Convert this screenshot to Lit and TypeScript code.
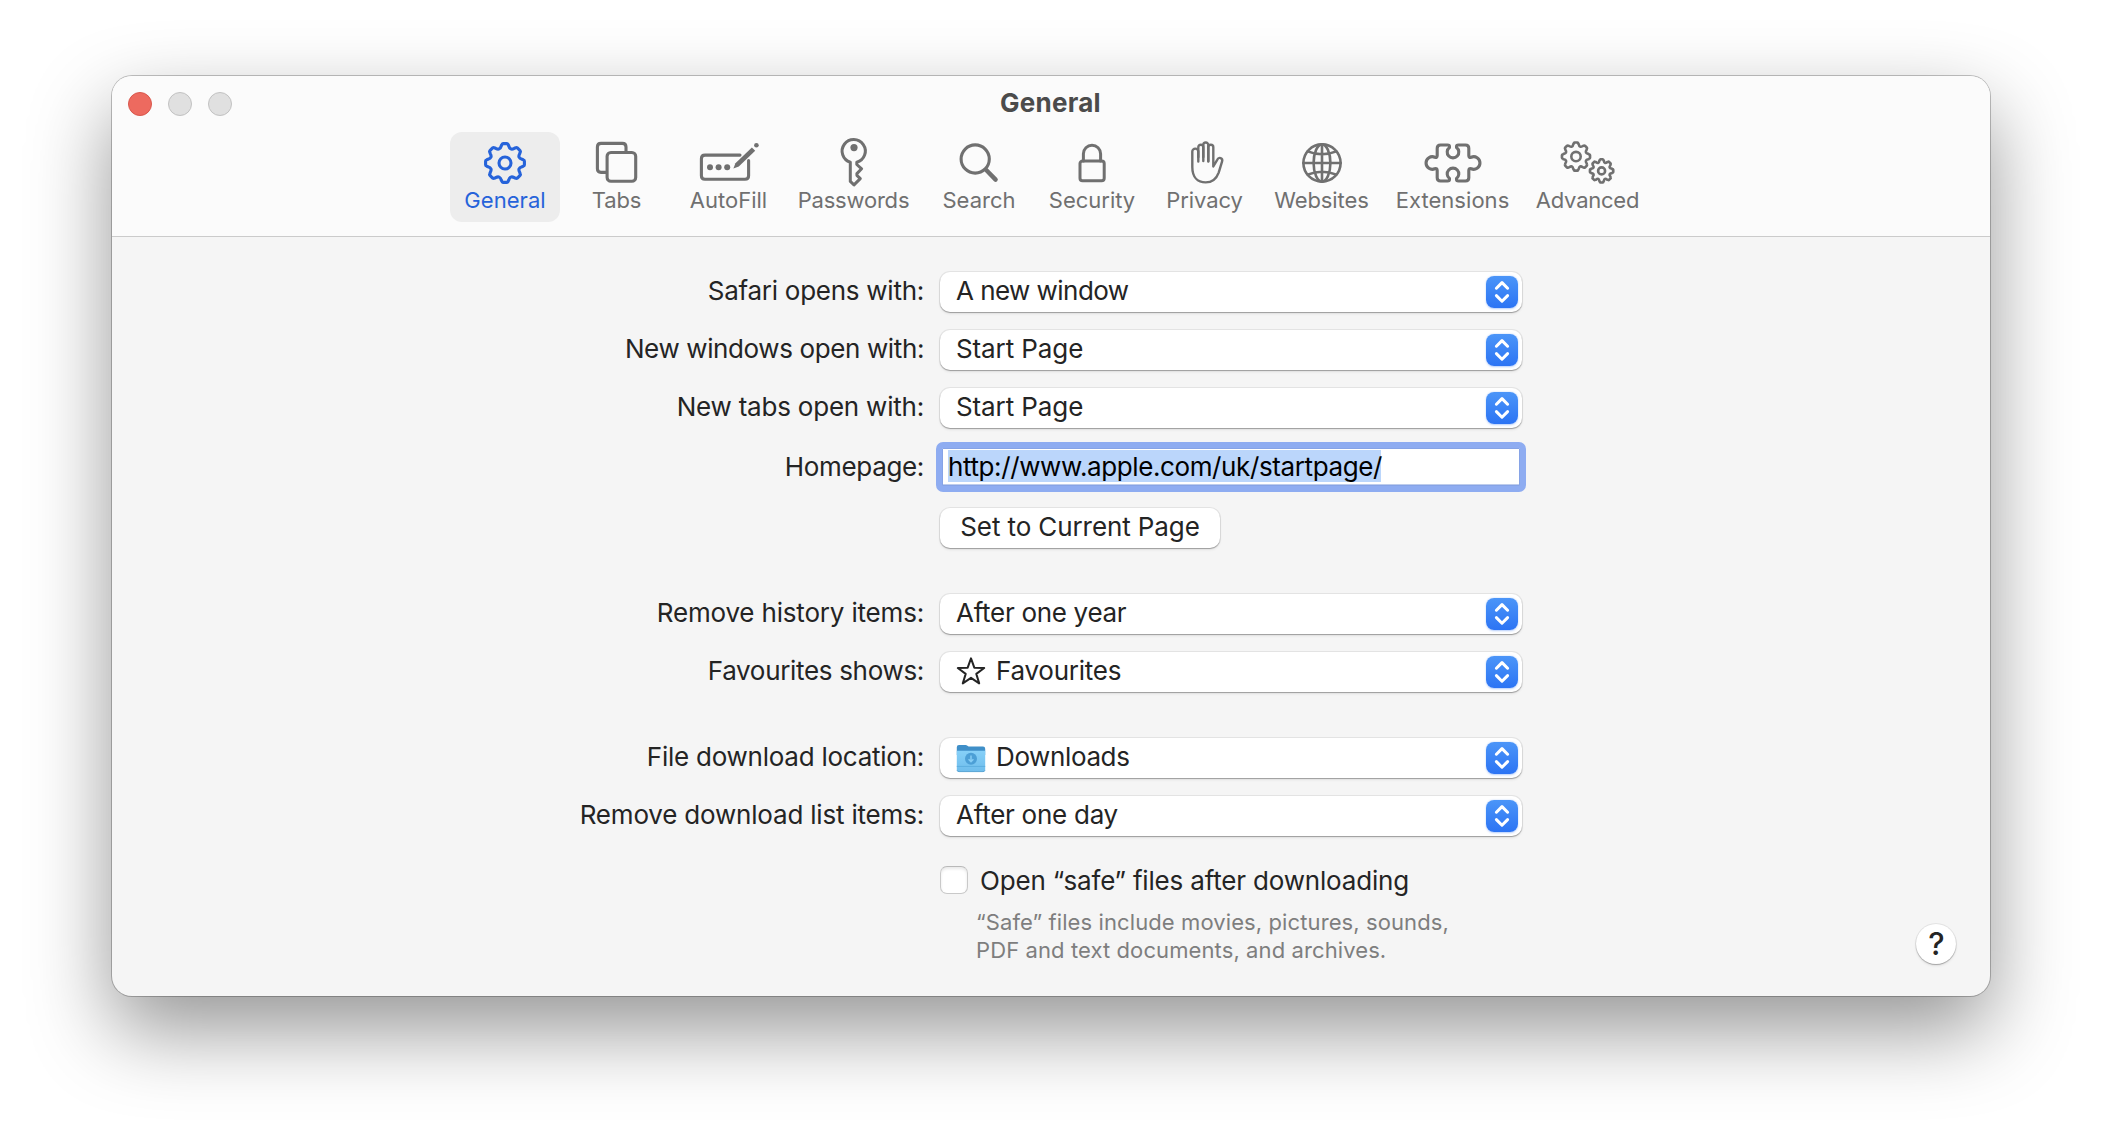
import { LitElement, html, css, svg, nothing } from "lit";
import type { SVGTemplateResult, TemplateResult } from "lit";
import { customElement, property } from "lit/decorators.js";

/** Outline of an eight-toothed cog centred on (cx, cy). */
function cog(cx: number, cy: number, tip: number, root: number): string {
  const at = (deg: number, r: number) => {
    const a = (deg * Math.PI) / 180;
    return `${(cx + r * Math.sin(a)).toFixed(2)} ${(cy - r * Math.cos(a)).toFixed(2)}`;
  };
  let d = "";
  for (let i = 0; i < 8; i++) {
    const t = i * 45;
    const mid = (tip + root) / 2;
    d += `${i ? "L" : "M"}${at(t - 9.5, tip - 0.8)}`;
    d += `Q${at(t - 8.5, tip)} ${at(t - 5.5, tip)}`;
    d += `L${at(t + 5.5, tip)}Q${at(t + 8.5, tip)} ${at(t + 9.5, tip - 0.8)}`;
    d += `L${at(t + 12.5, mid)}`;
    d += `Q${at(t + 22.5, root - 2)} ${at(t + 32.5, mid)}`;
  }
  return d + "Z";
}

/* Every toolbar glyph is drawn on a 64x52 canvas with its origin in the middle. */
const GLYPHS: Record<string, SVGTemplateResult> = {
  general: svg`<g stroke-width="3.1"><path d=${cog(0, 0, 19.5, 15.3)} /><circle cx="0" cy="0" r="6" /></g>`,
  tabs: svg`<g stroke-width="3.1">
    <path d="M-11 9.4H-16Q-19.6 9.4-19.6 5.8V-16Q-19.6-19.6-16-19.6H5.4Q9-19.6 9-16V-11" />
    <rect x="-9.9" y="-10.5" width="28.6" height="28.8" rx="3.8" /></g>`,
  autofill: svg`<g stroke-width="3.1">
    <path d="M11-7.9H-24Q-27.6-7.9-27.6-4.3V12.7Q-27.6 16.3-24 16.3H16Q19.6 16.3 19.6 12.7V-2.5" /></g>
    <g class="solid"><circle cx="-19" cy="4.3" r="3" /><circle cx="-10.4" cy="4.3" r="3" /><circle cx="-1.8" cy="4.3" r="3" />
    <path d="M4.4 5.4 6.4 0.3 22.9-15.5 26.2-12.2 9.8 3.4Z" /><circle cx="27.4" cy="-17.8" r="2.3" /></g>`,
  passwords: svg`<path stroke-width="3" d="M2.8-.7A11.6 11.6 0 1 0-3.7-.8V18.4L0 21.9 6.3 15.6 2.9 12.3V10.6L7.6 5.8 2.8 1.5Z" />
    <circle class="solid" cx="0" cy="-15.4" r="3.6" />`,
  search: svg`<circle stroke-width="3.1" cx="-3.8" cy="-4" r="14.1" /><path stroke-width="4.4" d="M7.2 7 16.6 16.6" />`,
  security: svg`<g stroke-width="3"><rect x="-12" y="-2" width="24.2" height="19.8" rx="2.6" />
    <path d="M-8.6-2V-9.2A8.6 8.6 0 0 1 8.6-9.2V-2" /></g>`,
  privacy: svg`<g stroke-width="2.4"><path d="M-6.7-1.5V-11.4A3 3 0 0 0-12.7-11.4V4C-12.7 14-7.4 19.4.7 19.4 7.2 19.4 11.3 16.1 13.7 9.6L17.1-1.6C18.1-5 13.8-6.6 12.2-3.2L8.3 3.5V-15.8A2.5 2.5 0 0 0 3.3-15.8V-1.5" />
    <path d="M3.3-2V-18A2.5 2.5 0 0 0-1.7-18V-2" /><path d="M-1.7-6V-15.8A2.5 2.5 0 0 0-6.7-15.8V-6" /></g>`,
  websites: svg`<g stroke-width="2.6"><circle cx="0" cy="0" r="18.6" /><ellipse cx="0" cy="0" rx="8.4" ry="18.6" />
    <path d="M0-18.6V18.6M-18.6 0H18.6M-14.4-11.6Q0-5.8 14.4-11.6M-14.4 11.6Q0 5.8 14.4 11.6" /></g>`,
  extensions: svg`<path stroke-width="3.1" d="M-12.5-18H-5.5Q-3.5-18-3.5-16.6V-15.5A5.8 5.8 0 1 0 3.5-15.5V-16.6Q3.5-18 5.5-18H12.5Q15.8-18 15.8-14.8V-7.6Q15.8-5 18.2-5.8A6.3 6.3 0 1 1 18.2 5.8Q15.8 5 15.8 7.6V14.8Q15.8 18 12.5 18H5.5Q3.5 18 3.5 16.6V15.5A5.8 5.8 0 1 0-3.5 15.5V16.6Q-3.5 18-5.5 18H-12.5Q-15.8 18-15.8 14.8V7.6Q-15.8 5-18.2 5.8A6.3 6.3 0 1 1-18.2-5.8Q-15.8-5-15.8-7.6V-14.8Q-15.8-18-12.5-18Z" />`,
  advanced: svg`<g stroke-width="2.6"><path d=${cog(-12, -6.4, 14.1, 11.1)} /><circle cx="-12" cy="-6.4" r="4.7" />
    <path d=${cog(13.6, 7.9, 11.7, 9.1)} /><circle cx="13.6" cy="7.9" r="3.5" /></g>`,
};

const TABS = [
  { id: "general", label: "General", tracking: 0.05 },
  { id: "tabs", label: "Tabs", tracking: -0.1 },
  { id: "autofill", label: "AutoFill", tracking: 0 },
  { id: "passwords", label: "Passwords", tracking: -0.2 },
  { id: "search", label: "Search", tracking: 0 },
  { id: "security", label: "Security", tracking: 0 },
  { id: "privacy", label: "Privacy", tracking: -0.1 },
  { id: "websites", label: "Websites", tracking: -0.08 },
  { id: "extensions", label: "Extensions", tracking: 0.04 },
  { id: "advanced", label: "Advanced", tracking: -0.24 },
];

const STAR = html`<svg class="lead" width="30" height="30" viewBox="0 0 30 30">
  <path d="M15 1.4 18.3 10.7 28.2 11 20.3 16.9 23.2 26.4 15 20.8 6.8 26.4 9.7 16.9 1.8 11 11.7 10.7Z"
    fill="none" stroke="#242424" stroke-width="2" stroke-linejoin="round" /></svg>`;

const FOLDER = html`<svg class="lead" width="30" height="30" viewBox="0 0 30 30">
  <defs><linearGradient id="front" x1="0" y1="0" x2="0" y2="1">
    <stop offset="0" stop-color="#86d0f8" /><stop offset="1" stop-color="#6fbdec" /></linearGradient></defs>
  <path d="M.8 4.2Q.8 2 3 2H9.6Q10.6 2 11.4 2.7L12.6 3.6H27Q29.2 3.6 29.2 5.8V12H.8Z" fill="#3f8fc8" />
  <path d="M.8 7.8H29.2V26.6Q29.2 28.8 27 28.8H3Q.8 28.8.8 26.6Z" fill="url(#front)" />
  <path d="M.8 23.4H29.2" stroke="#5daedf" stroke-width="1" />
  <path d="M1 27.2Q1.4 28.6 3 28.6H27Q28.6 28.6 29 27.2" stroke="#5aa5d4" stroke-width="1" fill="none" />
  <circle cx="15" cy="15.8" r="6" fill="#4c9fd6" />
  <path d="M15 12.6V18.4M12.6 16.2 15 18.7 17.4 16.2" fill="none" stroke="#86cdf5" stroke-width="1.5" />
</svg>`;

@customElement("pref-popup")
export class PrefPopup extends LitElement {
  static styles = css`
    :host { display: block; }
    .popup {
      box-sizing: border-box; height: 40px; padding: 0 4px 0 16px;
      display: flex; align-items: center; border-radius: 10px; background: #fff;
      box-shadow: 0 0 0 1px rgba(0, 0, 0, 0.07), 0 1px 1px rgba(0, 0, 0, 0.26), 0 2px 3px rgba(0, 0, 0, 0.07);
    }
    .value { flex: 1; height: 40px; line-height: 37px; white-space: nowrap; }
    .lead { flex: none; margin-right: 10px; }
    .stepper {
      flex: none; width: 32px; height: 32px; border-radius: 8px;
      background: linear-gradient(#4b95f8, #2c74f4);
      box-shadow: 0 0.5px 2px rgba(40, 110, 240, 0.35);
    }
  `;
  @property() value = "";
  @property({ type: Number }) tracking = -0.3;
  @property({ attribute: false }) icon: TemplateResult | null = null;
  render() {
    return html`<div class="popup">
      ${this.icon ?? nothing}
      <span class="value" style="letter-spacing:${this.tracking}px">${this.value}</span>
      <svg class="stepper" viewBox="0 0 32 32"><path d="M10.4 12.2 16 6.6 21.6 12.2M10.4 19.6 16 25.2 21.6 19.6"
        fill="none" stroke="#fff" stroke-width="3" stroke-linecap="round" stroke-linejoin="round" /></svg>
    </div>`;
  }
}

@customElement("app-root")
export class AppRoot extends LitElement {
  static styles = css`
    :host {
      display: block; height: 1144px; box-sizing: border-box; padding: 76px 112px 0; overflow: hidden;
      background: #fff; color: #242424;
      font: 400 26px Inter, "Liberation Sans", sans-serif;
    }
    .window {
      height: 920px; border-radius: 20px; background: #f5f5f5;
      display: flex; flex-direction: column;
      box-shadow: 0 0 0 1px rgba(0, 0, 0, 0.23), 0 34px 82px rgba(0, 0, 0, 0.42);
    }
    .header {
      box-sizing: border-box; height: 161px; background: #fbfbfb; border-radius: 20px 20px 0 0;
      border-bottom: 1px solid #cbcbcb;
    }
    .titlebar { height: 56px; display: grid; grid-template-columns: 1fr auto 1fr; align-items: center; }
    .lights { display: flex; gap: 16px; padding-left: 16px; }
    .light { box-sizing: border-box; width: 24px; height: 24px; border-radius: 50%; background: #e0e0e0; border: 1px solid #c2c2c2; }
    .light.close { background: #ed6a5f; border-color: #d9574c; }
    .title { margin: 0 1px 0 0; font-size: 26px; line-height: 54px; height: 56px; font-weight: 700; color: #4b4b4b; letter-spacing: 0.25px; }
    .tabs {
      display: grid; justify-content: center; margin-left: 1px;
      grid-template-columns: 111px 112px 112px 138px 113px 113px 112px 122px 140px 130px;
    }
    .tab {
      box-sizing: border-box; height: 90px; margin-right: 1px; padding-top: 5px; border-radius: 12px;
      display: flex; flex-direction: column; align-items: center; color: #707070;
    }
    .tab.selected { background: #ededed; color: #2663da; }
    .glyph { width: 64px; height: 52px; fill: none; stroke: currentColor; stroke-linecap: round; stroke-linejoin: round; }
    .glyph .solid { fill: currentColor; stroke: none; }
    .tab-label { margin-top: -3px; font-size: 22px; line-height: 28px; white-space: nowrap; }
    .form { padding-top: 35px; }
    .row { display: grid; grid-template-columns: 812px 582px 1fr; column-gap: 16px; margin-top: 18px; }
    .row:first-child { margin-top: 0; }
    .row.field-row { margin-top: 14px; }
    .row.after-field { margin-top: 16px; }
    .row.section { margin-top: 46px; }
    .row.check-row { margin-top: 30px; }
    .row.note-row { margin-top: 14px; }
    .label { height: 40px; line-height: 37px; text-align: right; white-space: nowrap; }
    .field-row .label { padding-top: 6px; height: 44px; }
    .field {
      box-sizing: border-box; width: 590px; height: 50px; margin-left: -4px; padding: 2px 0 0 6px;
      border: 6px solid #8eacf1; border-radius: 7px; background: #fff; color: #000;
      box-shadow: inset 0 0 0 1px #86a3e6, inset 0 -1.5px 0 #7c9ada;
    }
    .selection { display: inline-block; width: 433px; height: 32px; line-height: 33px; background: #bbd6fb; white-space: nowrap; letter-spacing: -0.39px; vertical-align: top; }
    .button {
      justify-self: start; box-sizing: border-box; width: 280px; height: 40px; padding: 0; border: 0; border-radius: 10px; background: #fff;
      color: inherit; font: inherit; line-height: 37px; letter-spacing: -0.1px; text-align: center;
      display: flex; justify-content: center;
      box-shadow: 0 0 0 1px rgba(0, 0, 0, 0.07), 0 1px 1px rgba(0, 0, 0, 0.26), 0 2px 3px rgba(0, 0, 0, 0.07);
    }
    .check { grid-column: 2; display: flex; gap: 12px; height: 28px; white-space: nowrap; }
    .box {
      box-sizing: border-box; width: 28px; height: 28px; border-radius: 7px; background: #fff;
      border: 1px solid #c9c9c9; border-top-color: #b9b9b9; box-shadow: inset 0 2px 3px rgba(0, 0, 0, 0.09);
    }
    .check-label { line-height: 29px; letter-spacing: -0.18px; }
    .note { grid-column: 2; margin: 0 0 0 36px; font-size: 22px; line-height: 28px; color: #7e7e7e; white-space: nowrap; letter-spacing: 0.1px; }
    .help {
      justify-self: end; width: 40px; height: 40px; margin: 16px 34px 0 0; padding: 0 0 0 1px; border: 0; border-radius: 50%; background: #fff;
      color: #242424; font: 500 31px/40px Inter, sans-serif; text-align: center;
      box-shadow: 0 0 0 1px rgba(0, 0, 0, 0.07), 0 1px 1px rgba(0, 0, 0, 0.22), 0 2px 3px rgba(0, 0, 0, 0.08);
    }
  `;

  private popup(label: string, labelTracking: number, value: string, tracking: number, section = false, icon: TemplateResult | null = null) {
    return html`<div class="row ${section ? "section" : ""}">
      <span class="label" style="letter-spacing:${labelTracking}px">${label}</span>
      <pref-popup .value=${value} .tracking=${tracking} .icon=${icon}></pref-popup>
    </div>`;
  }

  render() {
    return html`<div class="window">
      <div class="header">
        <div class="titlebar">
          <div class="lights"><span class="light close"></span><span class="light"></span><span class="light"></span></div>
          <h1 class="title">General</h1>
        </div>
        <div class="tabs">
          ${TABS.map((t) => html`<div class="tab ${t.id === "general" ? "selected" : ""}">
            <svg class="glyph" viewBox="-32 -26 64 52">${GLYPHS[t.id]}</svg>
            <span class="tab-label" style="letter-spacing:${t.tracking}px">${t.label}</span>
          </div>`)}
        </div>
      </div>
      <div class="form">
        ${this.popup("Safari opens with:", -0.26, "A new window", -0.55)}
        ${this.popup("New windows open with:", -0.38, "Start Page", -0.1)}
        ${this.popup("New tabs open with:", -0.21, "Start Page", -0.1)}
        <div class="row field-row">
          <span class="label" style="letter-spacing:-0.34px">Homepage:</span>
          <div class="field"><span class="selection">http://www.apple.com/uk/startpage/</span></div>
        </div>
        <div class="row after-field"><span></span><button class="button">Set to Current Page</button></div>
        ${this.popup("Remove history items:", -0.18, "After one year", -0.3, true)}
        ${this.popup("Favourites shows:", -0.32, "Favourites", -0.24, false, STAR)}
        ${this.popup("File download location:", -0.25, "Downloads", -0.38, true, FOLDER)}
        ${this.popup("Remove download list items:", -0.19, "After one day", -0.26)}
        <div class="row check-row"><div class="check"><span class="box"></span><span class="check-label">Open “safe” files after downloading</span></div></div>
        <div class="row note-row">
          <p class="note">“Safe” files include movies, pictures, sounds,<br />PDF and text documents, and archives.</p>
          <button class="help">?</button>
        </div>
      </div>
    </div>`;
  }
}
